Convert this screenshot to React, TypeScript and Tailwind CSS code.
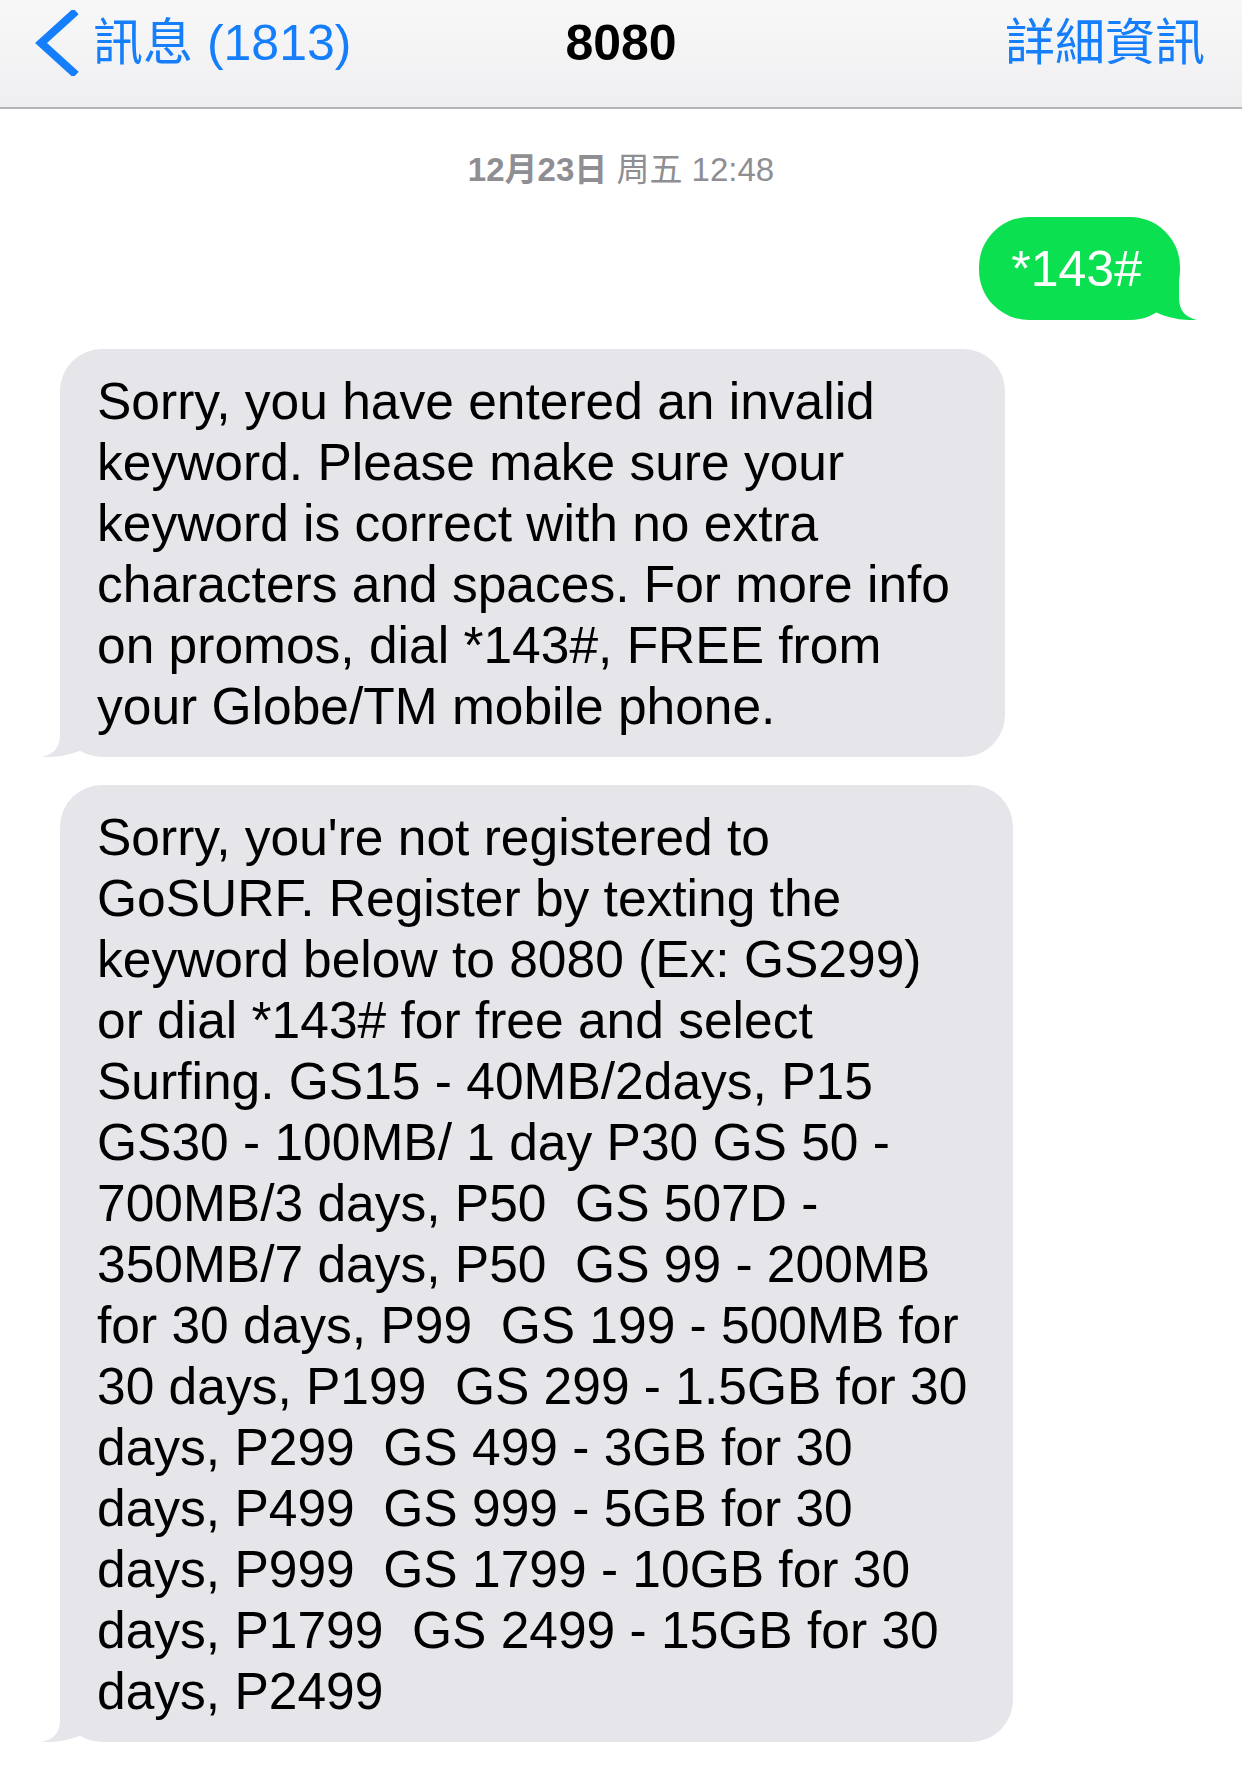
const firstReply = [
  "Sorry, you have entered an invalid",
  "keyword. Please make sure your",
  "keyword is correct with no extra",
  "characters and spaces. For more info",
  "on promos, dial *143#, FREE from",
  "your Globe/TM mobile phone.",
];

const secondReply = [
  "Sorry, you're not registered to",
  "GoSURF. Register by texting the",
  "keyword below to 8080 (Ex: GS299)",
  "or dial *143# for free and select",
  "Surfing. GS15 - 40MB/2days, P15",
  "GS30 - 100MB/ 1 day P30 GS 50 -",
  "700MB/3 days, P50  GS 507D -",
  "350MB/7 days, P50  GS 99 - 200MB",
  "for 30 days, P99  GS 199 - 500MB for",
  "30 days, P199  GS 299 - 1.5GB for 30",
  "days, P299  GS 499 - 3GB for 30",
  "days, P499  GS 999 - 5GB for 30",
  "days, P999  GS 1799 - 10GB for 30",
  "days, P1799  GS 2499 - 15GB for 30",
  "days, P2499",
];

function IncomingBubble({ lines, width }: { lines: string[]; width: string }) {
  return (
    <div className={`relative ml-[60px] rounded-[42px] bg-[#e5e5ea] pt-[22px] pb-[20px] pl-[37px] ${width}`}>
      <svg
        className="absolute -left-[20px] bottom-0"
        width="60"
        height="46"
        viewBox="0 0 60 46"
      >
        <path d="M20 2 L20 24 Q20 42 2 46 Q26 47 46 37 L46 2 Z" fill="#e5e5ea" />
      </svg>
      <div className="relative text-[51.5px] leading-[61px] text-black">
        {lines.map((line, i) => (
          <div key={i} className="whitespace-pre">
            {line}
          </div>
        ))}
      </div>
    </div>
  );
}

export default function App() {
  return (
    <div className="h-[1769px] w-[1242px] overflow-hidden bg-white font-['Liberation_Sans','Noto_Sans_CJK_TC',sans-serif]">
      <header className="h-[109px] border-b-2 border-[#b4b4b6] bg-gradient-to-b from-[#f8f8f9] to-[#efeff1]">
        <div className="grid h-[86px] grid-cols-[1fr_auto_1fr] items-center">
          <div className="flex items-center text-[#147efb]">
            <svg className="ml-[33px]" width="46" height="66" viewBox="0 0 46 66">
              <polyline
                points="40,4 8,33 40,62"
                fill="none"
                stroke="#147efb"
                strokeWidth="8"
                strokeLinecap="square"
              />
            </svg>
            <span className="ml-[14px] text-[50px] leading-none">訊息 (1813)</span>
          </div>
          <div className="text-[50px] font-bold leading-none text-black">8080</div>
          <div className="pr-[37px] text-right text-[50px] leading-none text-[#147efb]">詳細資訊</div>
        </div>
      </header>

      <main className="flex flex-col">
        <div className="mt-[41px] text-center text-[33px] leading-[40px] text-[#8e8e93]">
          <span className="font-bold">12月23日</span> 周五 12:48
        </div>

        <div className="mt-[27px] flex justify-end pr-[62px]">
          <div className="relative flex h-[103px] items-center rounded-[50px] bg-[#0be050] pl-[32px] pr-[38px]">
            <svg
              className="absolute -right-[19px] bottom-0"
              width="60"
              height="46"
              viewBox="0 0 60 46"
            >
              <path d="M40 2 L40 24 Q40 42 58 46 Q34 47 14 37 L14 2 Z" fill="#0be050" />
            </svg>
            <span className="relative text-[50px] leading-none text-white">*143#</span>
          </div>
        </div>

        <div className="mt-[29px]">
          <IncomingBubble lines={firstReply} width="w-[945px]" />
        </div>
        <div className="mt-[28px]">
          <IncomingBubble lines={secondReply} width="w-[953px]" />
        </div>
      </main>
    </div>
  );
}
